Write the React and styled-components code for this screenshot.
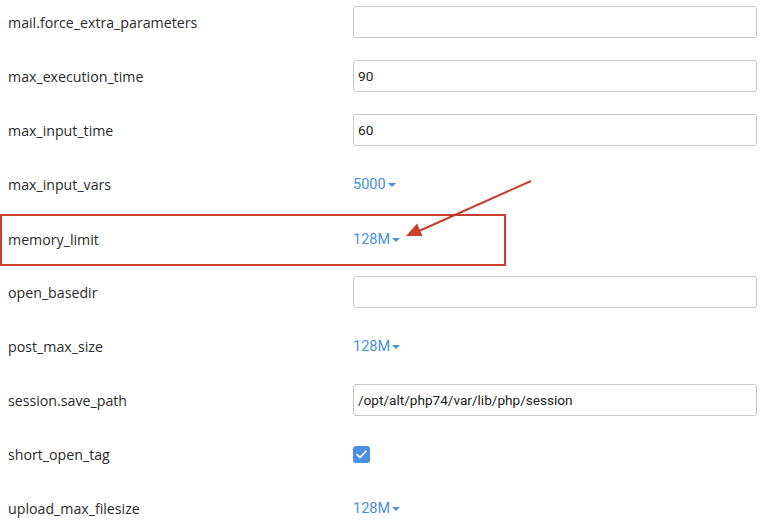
import React from "react";
import styled, { createGlobalStyle } from "styled-components";

const GlobalStyle = createGlobalStyle`
    html, body {
        margin: 0;
        padding: 0;
        background: #fff;
        overflow: hidden;
    }
    body {
        font-family: "Open Sans", "Liberation Sans", sans-serif;
    }
`;

const Page = styled.div`
    position: relative;
    width: 774px;
    height: 524px;
    overflow: hidden;
`;

const List = styled.div`
    display: flex;
    flex-direction: column;
    margin-top: -5px;
`;

const Row = styled.div`
    position: relative;
    display: grid;
    grid-template-columns: 345px 404px;
    align-items: center;
    height: 54px;
    padding-left: 8px;

    ${props => props.highlighted && `
        &::after {
            content: "";
            position: absolute;
            left: 0;
            top: 3px;
            bottom: -1px;
            width: 506px;
            box-sizing: border-box;
            border: 2px solid #c6402d;
            pointer-events: none;
        }
    `}
`;

const Label = styled.span`
    font-size: 14.2px;
    color: #2b2b2b;
    margin-top: ${props => props.shift || 0}px;
`;

const TextInput = styled.input`
    box-sizing: border-box;
    width: 404px;
    height: 32px;
    padding: 0 4px;
    border: 1px solid #c9c9c9;
    border-radius: 3px;
    font-family: Roboto, "Liberation Sans", sans-serif;
    font-size: 13.6px;
    color: #222;
    background: #fff;
    outline: none;
`;

const Dropdown = styled.span`
    display: inline-flex;
    align-items: center;
    gap: 2px;
    font-family: Roboto, "Liberation Sans", sans-serif;
    font-size: 14.5px;
    color: #4a8fdc;
    cursor: pointer;
    justify-self: start;
    margin-top: ${props => props.shift || 0}px;
`;

const Caret = styled.span`
    width: 0;
    height: 0;
    border-left: 4px solid transparent;
    border-right: 4px solid transparent;
    border-top: 4px solid #4a8fdc;
    margin-top: 1px;
`;

const Check = styled.span`
    display: inline-flex;
    align-items: center;
    justify-content: center;
    width: 17px;
    height: 17px;
    border-radius: 3px;
    background: #4a8fe0;
    justify-self: start;
`;

const ArrowLayer = styled.svg`
    position: absolute;
    left: 0;
    top: 0;
    pointer-events: none;
`;

const settings = [
    { name: "mail.force_extra_parameters", type: "text", value: "" },
    { name: "max_execution_time", type: "text", value: "90" },
    { name: "max_input_time", type: "text", value: "60" },
    { name: "max_input_vars", type: "select", value: "5000" },
    { name: "memory_limit", type: "select", value: "128M", highlighted: true, shift: 3 },
    { name: "open_basedir", type: "text", value: "" },
    { name: "post_max_size", type: "select", value: "128M" },
    { name: "session.save_path", type: "text", value: "/opt/alt/php74/var/lib/php/session" },
    { name: "short_open_tag", type: "check", value: true },
    { name: "upload_max_filesize", type: "select", value: "128M" },
];

const Control = ({ type, value, shift }) => {
    if (type === "text") {
        return <TextInput defaultValue={value} />;
    }
    if (type === "check") {
        return (
            <Check>
                <svg width="11" height="9" viewBox="0 0 11 9">
                    <path d="M1 4.6 L4 7.4 L10 1.2" fill="none" stroke="#fff" strokeWidth="1.6" strokeLinecap="round" strokeLinejoin="round" />
                </svg>
            </Check>
        );
    }
    return (
        <Dropdown shift={shift}>
            {value}
            <Caret />
        </Dropdown>
    );
};

const App = () => {
    return (
        <Page>
            <GlobalStyle />
            <List>
                {settings.map(s => (
                    <Row key={s.name} highlighted={s.highlighted}>
                        <Label shift={s.shift}>{s.name}</Label>
                        <Control type={s.type} value={s.value} shift={s.shift} />
                    </Row>
                ))}
            </List>
            {/* annotation arrow pointing at memory_limit */}
            <ArrowLayer width="774" height="524">
                <line x1="531" y1="181" x2="419" y2="231" stroke="#c6402d" strokeWidth="2" />
                <polygon points="406,236 422.5,236 417,223.5" fill="#c6402d" />
            </ArrowLayer>
        </Page>
    );
};

export default App;
